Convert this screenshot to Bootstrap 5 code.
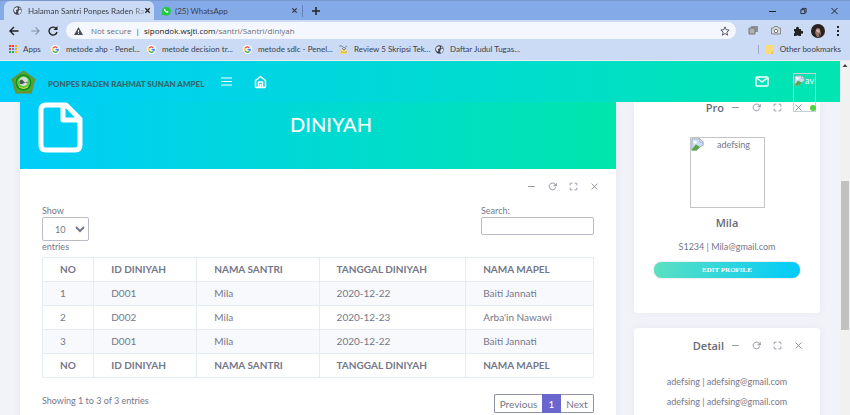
<!DOCTYPE html>
<html lang="id">
<head>
<meta charset="utf-8">
<meta name="viewport" content="width=device-width, initial-scale=1">
<title>Halaman Santri Ponpes Raden Rahmat</title>
<link href="https://cdn.jsdelivr.net/npm/bootstrap@5.3.0/dist/css/bootstrap.min.css" rel="stylesheet">
<style>
body{height:100vh;overflow:hidden;font:9px/18px Lato,"Noto Sans",sans-serif;color:#74778a;background:#f2f3f9}
button{border:0;background:none;padding:0;color:inherit;line-height:1}
a{color:inherit;text-decoration:none}
svg{display:block;flex-shrink:0}
.stroke{fill:none;stroke:currentColor;stroke-width:2;stroke-linecap:round;stroke-linejoin:round}
.browser{font:8px/12px Lato,"Noto Sans",sans-serif;color:#3c4149;background:#cbdbf5}
.tabstrip{background:#85aae8;height:20px;border-top:1px solid #7799d0}
.tab-on{background:#cbdbf5;width:150px;border-radius:6px 6px 0 0;margin-left:4px;padding:0 8px 0 9px}
.tab-off{width:144px;padding-left:7px}
.fade-end{white-space:nowrap;margin-left:6px;-webkit-mask-image:linear-gradient(90deg,#000 88%,#0004);mask-image:linear-gradient(90deg,#000 88%,#0004)}
.toolbar{height:21px;padding:0 10px 0 9px}
.omni{background:#f4f7fd;border-radius:9px;height:17px;padding:0 6px 0 8px;margin-left:8px;font:8px/12px "Open Sans",sans-serif}
.muted-url{color:#6b7079}
.host{color:#222}
.marks{height:19px;padding:0 9px 3px;white-space:nowrap}
.marks a{display:flex;align-items:center;gap:6px}
.bm{width:96px}
.bm-apps{width:42px}
.topnav{background:linear-gradient(90deg,#00cdfa,#00e6b0);height:41px;z-index:2;padding-left:11px;color:#fff}
.brand-name{font:900 8px/12px Lato,sans-serif;color:#36656f;white-space:nowrap}
.home-link{margin-left:21px}
.avatar{width:23px;height:39px;border:1px solid #c5d0d2;font-size:9px;line-height:14px}
.dot{width:6px;height:6px;border-radius:50%;background:#54d03c;right:0;bottom:1px}
.page-grid{display:grid;grid-template-columns:596fr 186fr;gap:18px;padding:0 20px}
.panel{background:#fff;box-shadow:0 0 8px #e6e7f2}
.banner{background:linear-gradient(90deg,#00cdfa,#00e6ac);height:67px;color:#fff}
.banner h1{font:500 20px/24px Lato,sans-serif;margin:0 0 0 206px}
.tools{display:flex;gap:12px;color:#74778a}
.main-body{padding:13px 22px}
.main-tools{margin-right:-5px}
.filters{margin-top:14px;line-height:12px}
.field{border:1px solid #b9bcc8;border-radius:2px;color:#74778a;background:#fff;display:block;outline:0;font-size:9px}
select.field{width:47px;height:24px;padding:0 0 0 8px}
input.field{width:113px;height:18px}
.grid-table{width:100%;table-layout:fixed;border-collapse:collapse;font-size:10px;line-height:15px;margin-top:4px}
.grid-table th,.grid-table td{border:1px solid #e3ebf3;padding:4px 0 4px 17px;white-space:nowrap}
.grid-table tbody tr:nth-child(odd){background:#f8f9fc}
.table-foot{margin-top:14px}
.pager{margin-top:2px}
.pager button{height:19px;border:1px solid #8f93a3;border-width:1px 0;font-size:10px;line-height:16px}
.pager .prev{border-left-width:1px;border-radius:2px 0 0 2px;width:48px}
.pager .cur{background:#6967ce;border-color:#6967ce;color:#fff;width:19px}
.pager .next{border-right-width:1px;border-radius:0 2px 2px 0;width:33px}
.side-head{padding-right:17px;gap:7px;height:11px}
.side-title{font:600 11px/14px "Open Sans",sans-serif;color:#666a78;margin:0}
.profile{padding-bottom:35px;border-radius:0 0 3px 3px}
.photo{width:75px;height:71px;border:1px solid #c4c4c4;line-height:13px}
.edit{font:bold 7px/14px "Liberation Serif",serif;color:#fff;background:linear-gradient(100deg,#5ce0c0,#00cbfa);border-radius:8px;height:16px;width:calc(100% - 40px);margin:6px auto 0;box-shadow:0 0 1px #456}
.detail{margin-top:15px;padding:12px 0 24px;border-radius:3px}
.contacts{margin-top:21px;line-height:20px}
.scroll{width:10px;background:#f1f1f1}
.thumb{flex:149 0 0;background:#c1c1c1;margin:0 1px}
.above{flex:110 0 0}
.below{flex:85 0 0}
</style>
<script src="https://cdn.jsdelivr.net/npm/bootstrap@5.3.0/dist/js/bootstrap.bundle.min.js"></script>
</head>
<body class="d-flex flex-column">
<svg width="0" height="0" class="position-absolute" aria-hidden="true">
<symbol id="globe" viewBox="0 0 16 16"><circle cx="8" cy="8" r="7.5" fill="#40464f"/><path d="M2 5l4-3 3 1-1 3-3 1 1 3-2 2-2-3zM10 8l4-2 1 3-3 5-3-1zM11 2l3 3-3 1z" fill="#dfe8f8"/></symbol>
<symbol id="goog" viewBox="0 0 20 20"><circle cx="10" cy="10" r="10" fill="#fff"/><g fill="none" stroke-width="3"><path d="M14.2 5.8A6 6 0 0 0 4.8 7" stroke="#ea4335"/><path d="M4.8 7a6 6 0 0 0 0 6" stroke="#fbbc05"/><path d="M4.8 13a6 6 0 0 0 9.2 1.5" stroke="#34a853"/><path d="M14 14.5A6 6 0 0 0 16 10h-6" stroke="#4285f4"/></g></symbol>
<symbol id="broken" viewBox="0 0 16 16"><path d="M1 1h10l4 4v4l-4 2-4 4H1z" fill="#c8dcf6" stroke="#9a9fa8"/><path d="M1 14l5-6 5 3-4 4H1z" fill="#55a844"/><path d="M11 1v4h4z" fill="#fff" stroke="#9a9fa8"/><circle cx="5" cy="5" r="2" fill="#fff"/></symbol>
<symbol id="minus" viewBox="0 0 24 24"><path class="stroke" d="M4 12h16"/></symbol>
<symbol id="reload" viewBox="0 0 24 24"><path class="stroke" d="M22 4v6h-6M20.500 15a9 9 0 1 1-2-9.400L22 10"/></symbol>
<symbol id="expand" viewBox="0 0 24 24"><path class="stroke" d="M8 3H5a2 2 0 0 0-2 2v3m18 0V5a2 2 0 0 0-2-2h-3m0 18h3a2 2 0 0 0 2-2v-3M3 16v3a2 2 0 0 0 2 2h3"/></symbol>
<symbol id="cross" viewBox="0 0 24 24"><path class="stroke" d="M5 5l14 14M19 5L5 19"/></symbol>
</svg>

<header class="browser">
  <div class="tabstrip d-flex">
    <div class="tab-on d-flex align-items-center"><svg width="9" height="9"><use href="#globe"/></svg><span class="fade-end">Halaman Santri Ponpes Raden Ra</span><button class="ms-auto" aria-label="Close tab"><svg width="7" height="7" viewBox="0 0 8 8"><path d="M1.500 1.500l5 5m0-5l-5 5" stroke="#222" stroke-width="1.500"/></svg></button></div>
    <div class="tab-off d-flex align-items-center"><svg width="10" height="10" viewBox="0 0 20 20"><path d="M1 19l1.500-5A9 9 0 1 1 6 18z" fill="#25c93f"/><path d="M6.500 5.500q-2 2 1.500 5.500t6 2.500l1-2-2.500-1.500-1.200 1.200-3-3 1.200-1.200z" fill="#fff"/></svg><span class="ms-1 flex-grow-1">(25) WhatsApp</span><button aria-label="Close tab"><svg width="7" height="7" viewBox="0 0 8 8"><path d="M1.500 1.500l5 5m0-5l-5 5" stroke="#333" stroke-width="1.300"/></svg></button></div>
    <button class="d-flex align-items-center ms-1" aria-label="New tab"><svg width="20" height="12" viewBox="0 0 20 12"><path d="M.5 0v12" stroke="#6484bd"/><path d="M10 6h8M14 2v8" stroke="#222" stroke-width="1.500"/></svg></button>
    <div class="ms-auto d-flex align-items-center gap-4 me-2 pe-1">
      <svg width="7" height="8" viewBox="0 0 7 8"><path d="M0 4.500h7" stroke="#222"/></svg>
      <svg width="7" height="8" viewBox="0 0 8 8"><path d="M1 2.500h4.500V7H1zM2.500 2.500V1H7v4.500H5.500" fill="none" stroke="#222"/></svg>
      <svg width="7" height="8" viewBox="0 0 7 8"><path d="M.5 1l6 6m0-6l-6 6" stroke="#222"/></svg>
    </div>
  </div>
  <div class="toolbar d-flex align-items-center">
    <button aria-label="Back"><svg width="10" height="10" viewBox="0 0 10 10"><path d="M9.500 5H1m4-4L1 5l4 4" fill="none" stroke="#222" stroke-width="1.400"/></svg></button>
    <button class="ms-2 me-2 ps-1" aria-label="Forward"><svg width="9" height="10" viewBox="0 0 10 10"><path d="M.5 5H9M5 1l4 4-4 4" fill="none" stroke="#8591a5" stroke-width="1.200"/></svg></button>
    <button aria-label="Reload"><svg width="10" height="10" viewBox="0 0 10 10"><path d="M8.300 2.700A4 4 0 1 0 9 6" fill="none" stroke="#222" stroke-width="1.400"/><path d="M9.500 0v4h-4z" fill="#222"/></svg></button>
    <div class="omni d-flex align-items-center flex-grow-1">
      <svg width="9" height="8" viewBox="0 0 9 8"><path d="M4.500 0L9 8H0z" fill="#4a4e55"/><path d="M4.500 3v2.500M4.500 6v1" stroke="#fff"/></svg>
      <span class="ms-1 ps-1 text-nowrap muted-url">Not secure</span><span class="mx-1">|</span>
      <a href="#" class="flex-grow-1"><span class="host">sipondok.wsjti.com</span><span class="muted-url">/santri/Santri/diniyah</span></a>
      <svg width="10" height="10" viewBox="0 0 24 24"><path d="M12 2l3 7 7 .600-5.500 5 1.700 7.400-6.200-4L5.800 22l1.700-7.400L2 9.600 9 9z" fill="none" stroke="#3c4149" stroke-width="2"/></svg>
    </div>
    <div class="d-flex align-items-center gap-2 ps-2">
      <svg class="ms-1" width="11" height="9" viewBox="0 0 11 9"><path d="M3 0h7v6H3z" fill="#909296"/><path d="M1 2h6v6H1z" fill="#adafb2" stroke="#777"/></svg>
      <svg class="ms-1" width="10" height="9" viewBox="0 0 10 9"><path d="M.5 2h2l1-1.500h3L7.500 2h2v6h-9z" fill="#d9dadd" stroke="#85888d"/><circle cx="5" cy="5" r="1.700" fill="#fff" stroke="#777"/></svg>
      <svg class="ms-1" width="10" height="10" viewBox="0 0 10 10"><path d="M1 3h2.200a1.500 1.500 0 1 1 2.600 0H8v2a1.500 1.500 0 1 1 0 2.600V10H5.700a1.300 1.300 0 0 0-2.400 0H1V7.500a1.300 1.300 0 0 0 0-2.500z" fill="#222"/></svg>
      <svg width="14" height="14" viewBox="0 0 14 14"><circle cx="7" cy="7" r="7" fill="#29211f"/><path d="M5 5q2-2 4 0l1 5-2 3H6L4 9z" fill="#947166"/><path d="M5 6l2-1 2 2-1 2-2-1z" fill="#d5b4a6"/><path d="M8 9l2 3-2 1z" fill="#453b50"/></svg>
      <svg class="ms-1" width="3" height="10" viewBox="0 0 3 10"><path d="M0 0h2v2H0zM0 4h2v2H0zM0 8h2v2H0z" fill="#222"/></svg>
    </div>
  </div>
  <nav class="marks d-flex align-items-center">
    <a href="#" class="bm-apps"><svg width="8" height="8" viewBox="0 0 8 8"><path d="M0 1h2M0 4h2M3 1h2" stroke="#ea4335" stroke-width="2"/><path d="M6 1h2M6 4h2" stroke="#f2a60c" stroke-width="2"/><path d="M3 4h2" stroke="#4285f4" stroke-width="2"/><path d="M0 7h2M3 7h2" stroke="#34a853" stroke-width="2"/><path d="M6 7h2" stroke="#fbbc05" stroke-width="2"/></svg>Apps</a>
    <a href="#" class="bm"><svg width="9" height="9"><use href="#goog"/></svg>metode ahp - Penel...</a>
    <a href="#" class="bm"><svg width="9" height="9"><use href="#goog"/></svg>metode decision tr...</a>
    <a href="#" class="bm"><svg width="9" height="9"><use href="#goog"/></svg>metode sdlc - Penel...</a>
    <a href="#" class="bm"><svg width="9" height="9" viewBox="0 0 9 9"><path d="M2 4h5l1 5H1z" fill="#f0d678"/><path d="M0 1h3l2 2 3-2M3 3l2 2 2-2" fill="none" stroke="#7d8794"/><path d="M2 7h6" stroke="#dfb53d"/></svg>Review 5 Skripsi Tek...</a>
    <a href="#"><svg width="9" height="9"><use href="#globe"/></svg>Daftar Judul Tugas...</a>
    <a href="#" class="ms-auto"><svg width="16" height="9" viewBox="0 0 16 9"><path d="M.5 0v9" stroke="#9cabc5"/><path d="M8 0h7v9H8z" fill="#fadb7a"/><path d="M15 6v3h-2z" fill="#edbd3b"/></svg>Other bookmarks</a>
  </nav>
</header>

<div class="d-flex flex-grow-1 overflow-hidden border-top border-secondary-subtle">
<div class="flex-grow-1 overflow-hidden">
  <nav class="topnav d-flex position-relative">
    <a href="#" class="d-flex align-items-center">
      <svg width="25" height="24" viewBox="0 0 50 48"><path d="M25 1l24 17-8 29H9L1 18z" fill="#7b8b2b"/><path d="M25 4l20 15-7 24H12L5 19z" fill="#39b52e"/><circle cx="25" cy="25" r="16" fill="#14892c"/><circle cx="25" cy="25" r="13" fill="#5ecb3f"/><circle cx="25" cy="23" r="9" fill="#d4dfd3"/><path d="M17 22q4-6 8 0t8 0v5q-4-3-8 0t-8 0z" fill="#4e5955"/><path d="M16 34q9 6 18 0" fill="none" stroke="#d8d33c" stroke-width="2"/></svg>
      <span class="brand-name ms-2 ps-1 mt-1">PONPES RADEN RAHMAT SUNAN AMPEL</span></a>
    <button class="ms-3" aria-label="Menu"><svg width="13" height="12" viewBox="0 0 13 12"><path d="M1 2h11M1 5.500h11M1 9h11" stroke="#fff" stroke-width="1.200"/></svg></button>
    <a href="#" class="home-link d-flex align-items-center" aria-label="Home"><svg width="13" height="14" viewBox="0 0 26 28"><path class="stroke" style="stroke-width:3" d="M3 11L13 3l10 8v12q0 2-2 2H5q-2 0-2-2zM9 25V14h8v11M13 19v6"/></svg></a>
    <a href="#" class="d-flex align-items-center ms-auto" aria-label="Mail"><svg width="14" height="11" viewBox="0 0 28 22"><rect class="stroke" style="stroke-width:3" x="2" y="2" width="24" height="18" rx="2"/><path class="stroke" style="stroke-width:3" d="M3 4l11 8 11-8"/></svg></a>
    <div class="position-relative ms-4 me-4 mt-2 pt-1 flex-shrink-0 align-self-start"><div class="avatar d-flex"><svg width="11" height="13"><use href="#broken"/></svg>av</div><span class="dot position-absolute"></span></div>
  </nav>

  <div class="page-grid">
    <main class="panel">
      <div class="banner d-flex align-items-center ps-3">
        <svg width="48" height="58" viewBox="0 0 48 58" class="mb-3"><path d="M10 6h20l14 14v26q0 5-5 5H10q-5 0-5-5V11q0-5 5-5zM27 6v15h17" fill="none" stroke="#fff" stroke-width="5" stroke-linejoin="round"/></svg>
        <h1 class="mb-4">DINIYAH</h1>
      </div>
      <div class="main-body">
        <div class="tools main-tools justify-content-end">
          <button aria-label="Collapse"><svg width="9" height="9"><use href="#minus"/></svg></button><button aria-label="Refresh"><svg width="9" height="9"><use href="#reload"/></svg></button><button aria-label="Expand"><svg width="9" height="9"><use href="#expand"/></svg></button><button aria-label="Close"><svg width="9" height="9"><use href="#cross"/></svg></button>
        </div>
        <div class="filters d-flex justify-content-between">
          <label>Show<select class="field"><option>10</option></select>entries</label>
          <label>Search:<input class="field" type="search"></label>
        </div>
        <table class="grid-table">
          <colgroup><col style="width:9.300%"><col style="width:18.700%"><col style="width:22.200%"><col style="width:26.600%"><col></colgroup>
          <thead><tr><th>NO</th><th>ID DINIYAH</th><th>NAMA SANTRI</th><th>TANGGAL DINIYAH</th><th>NAMA MAPEL</th></tr></thead>
          <tbody>
            <tr><td>1</td><td>D001</td><td>Mila</td><td>2020-12-22</td><td>Baiti Jannati</td></tr>
            <tr><td>2</td><td>D002</td><td>Mila</td><td>2020-12-23</td><td>Arba'in Nawawi</td></tr>
            <tr><td>3</td><td>D001</td><td>Mila</td><td>2020-12-22</td><td>Baiti Jannati</td></tr>
          </tbody>
          <tfoot><tr><th>NO</th><th>ID DINIYAH</th><th>NAMA SANTRI</th><th>TANGGAL DINIYAH</th><th>NAMA MAPEL</th></tr></tfoot>
        </table>
        <div class="table-foot d-flex justify-content-between">
          <span>Showing 1 to 3 of 3 entries</span>
          <div class="pager d-flex"><button class="prev">Previous</button><button class="cur">1</button><button class="next">Next</button></div>
        </div>
      </div>
    </main>

    <aside>
      <section class="panel profile text-center">
        <div class="side-head d-flex justify-content-end align-items-center">
          <h2 class="side-title">Pro</h2>
          <div class="tools"><button aria-label="Collapse"><svg width="9" height="9"><use href="#minus"/></svg></button><button aria-label="Refresh"><svg width="9" height="9"><use href="#reload"/></svg></button><button aria-label="Expand"><svg width="9" height="9"><use href="#expand"/></svg></button><button aria-label="Close"><svg width="9" height="9"><use href="#cross"/></svg></button></div>
        </div>
        <div class="photo mx-auto d-flex mt-4"><svg width="13" height="13"><use href="#broken"/></svg><span class="flex-grow-1">adefsing</span></div>
        <h2 class="side-title mt-2">Mila</h2>
        <div class="mt-2">S1234 | Mila@gmail.com</div>
        <button class="edit d-block">EDIT PROFILE</button>
      </section>
      <section class="panel detail text-center">
        <div class="side-head d-flex justify-content-end align-items-center">
          <h2 class="side-title">Detail</h2>
          <div class="tools"><button aria-label="Collapse"><svg width="9" height="9"><use href="#minus"/></svg></button><button aria-label="Refresh"><svg width="9" height="9"><use href="#reload"/></svg></button><button aria-label="Expand"><svg width="9" height="9"><use href="#expand"/></svg></button><button aria-label="Close"><svg width="9" height="9"><use href="#cross"/></svg></button></div>
        </div>
        <div class="contacts"><div>adefsing | adefsing@gmail.com</div>
        <div>adefsing | adefsing@gmail.com</div></div>
      </section>
    </aside>
  </div>
</div>
<div class="scroll d-flex flex-column flex-shrink-0">
  <svg width="10" height="10" viewBox="0 0 10 10"><path d="M2.500 6L5 3l2.500 3z" fill="#444"/></svg>
  <div class="above"></div><div class="thumb"></div><div class="below"></div>
</div>
</div>
</body>
</html>
